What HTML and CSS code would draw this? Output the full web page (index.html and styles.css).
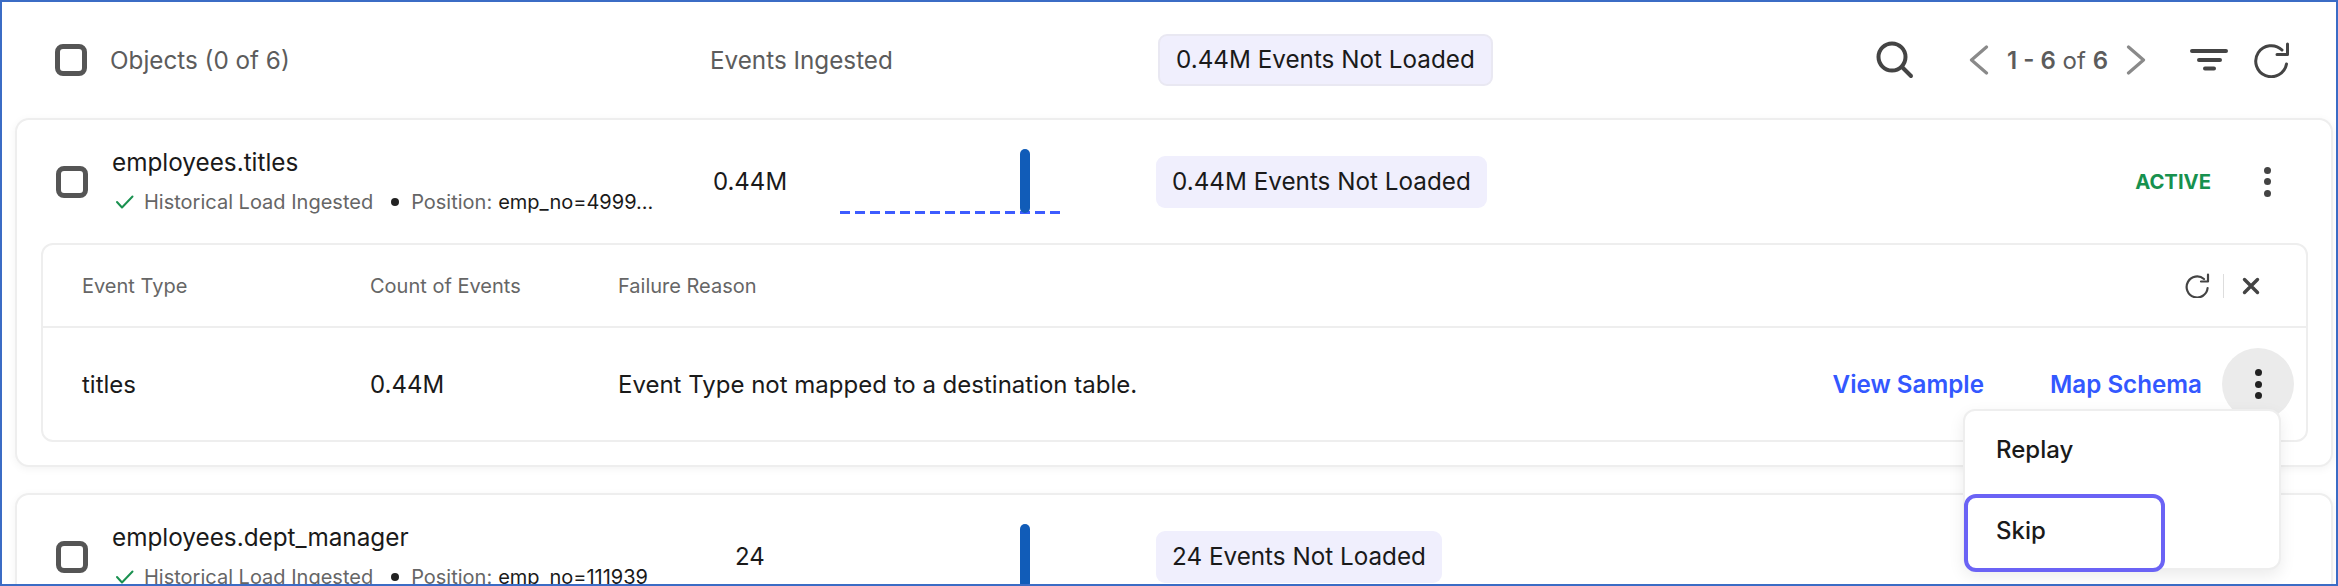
FILE: index.html
```html
<!DOCTYPE html>
<html lang="en">
<head>
    <meta charset="UTF-8">
    <title>Objects</title>
    <link rel="stylesheet" href="styles.css">
</head>
<body>
    <div class="frame">
        <div class="toolbar">
            <div class="toolbar-name">
                <span class="checkbox"></span>
                <span>Objects (0 of 6)</span>
            </div>
            <div class="toolbar-events">Events Ingested</div>
            <div class="badge badge-outlined">0.44M Events Not Loaded</div>
            <div class="toolbar-actions">
                <svg class="icon-search" width="38" height="38" viewBox="0 0 38 38" fill="none" stroke="#444" stroke-width="4" stroke-linecap="round"><circle cx="16" cy="16" r="13.5"/><path d="M26 26 L35 35"/></svg>
                <div class="pager">
                    <svg width="20" height="30" viewBox="0 0 20 30" fill="none" stroke="#8a8a8a" stroke-width="3.2" stroke-linecap="round" stroke-linejoin="round"><path d="M17.5 2 L2.5 15 L17.5 28"/></svg>
                    <span class="pager-text"><b>1 - 6</b> of <b>6</b></span>
                    <svg width="20" height="30" viewBox="0 0 20 30" fill="none" stroke="#8a8a8a" stroke-width="3.2" stroke-linecap="round" stroke-linejoin="round"><path d="M2.5 2 L17.5 15 L2.5 28"/></svg>
                </div>
                <svg class="icon-filter" width="38" height="22" viewBox="0 0 38 22" fill="none" stroke="#444" stroke-width="4" stroke-linecap="round"><path d="M2 2 H36 M9 11 H30 M15 19.5 H24"/></svg>
                <svg class="icon-refresh" width="36" height="36" viewBox="0 0 36 36" fill="none" stroke="#444" stroke-width="3" stroke-linecap="round" stroke-linejoin="round"><path d="M28 8 A15.5 15.5 0 1 0 32.5 22"/><path d="M33.5 2 V12.5 H23"/></svg>
            </div>
        </div>

        <div class="card">
            <div class="row">
                <div class="row-name">
                    <span class="checkbox"></span>
                    <div>
                        <div class="object-title">employees.titles</div>
                        <div class="object-meta">
                            <svg width="20" height="14" viewBox="0 0 20 14" fill="none" stroke="#1a9150" stroke-width="2" stroke-linecap="round" stroke-linejoin="round"><path d="M2 7 L7 12.5 L17.5 1.5"/></svg>
                            <span class="meta-label">Historical Load Ingested</span>
                            <span class="meta-dot"></span>
                            <span class="meta-label">Position:</span>
                            <span class="meta-value">emp_no=4999...</span>
                        </div>
                    </div>
                </div>
                <div class="row-count">0.44M</div>
                <div class="chart"><span class="chart-bar"></span></div>
                <div class="badge">0.44M Events Not Loaded</div>
                <div class="row-status">
                    <span class="status-active">ACTIVE</span>
                    <span class="kebab"><i></i><i></i><i></i></span>
                </div>
            </div>

            <div class="failures">
                <div class="failures-head">
                    <span class="col-type">Event Type</span>
                    <span class="col-count">Count of Events</span>
                    <span class="col-reason">Failure Reason</span>
                    <div class="head-actions">
                        <svg width="25" height="25" viewBox="0 0 25 25" fill="none" stroke="#444" stroke-width="2.2" stroke-linecap="round" stroke-linejoin="round"><path d="M19 6 A10.5 10.5 0 1 0 22.6 15"/><path d="M23 1.5 V8.5 H16"/></svg>
                        <span class="head-divider"></span>
                        <svg width="18" height="18" viewBox="0 0 18 18" fill="none" stroke="#444" stroke-width="3.4" stroke-linecap="round"><path d="M2.5 2.5 L15.5 15.5 M15.5 2.5 L2.5 15.5"/></svg>
                    </div>
                </div>
                <div class="failures-row">
                    <span class="col-type">titles</span>
                    <span class="col-count">0.44M</span>
                    <span class="col-reason">Event Type not mapped to a destination table.</span>
                    <div class="row-actions">
                        <a class="link">View Sample</a>
                        <a class="link">Map Schema</a>
                        <span class="kebab-round"><span class="kebab kebab-dark"><i></i><i></i><i></i></span></span>
                    </div>
                </div>
            </div>
        </div>

        <div class="card">
            <div class="row">
                <div class="row-name">
                    <span class="checkbox"></span>
                    <div>
                        <div class="object-title">employees.dept_manager</div>
                        <div class="object-meta">
                            <svg width="20" height="14" viewBox="0 0 20 14" fill="none" stroke="#1a9150" stroke-width="2" stroke-linecap="round" stroke-linejoin="round"><path d="M2 7 L7 12.5 L17.5 1.5"/></svg>
                            <span class="meta-label">Historical Load Ingested</span>
                            <span class="meta-dot"></span>
                            <span class="meta-label">Position:</span>
                            <span class="meta-value">emp_no=111939</span>
                        </div>
                    </div>
                </div>
                <div class="row-count">24</div>
                <div class="chart"><span class="chart-bar"></span></div>
                <div class="badge">24 Events Not Loaded</div>
            </div>
        </div>

        <!-- Open menu sits over the cards -->
        <div class="menu">
            <div class="menu-item">Replay</div>
            <div class="menu-item menu-item-focus">Skip</div>
        </div>
    </div>
</body>
</html>
```

FILE: styles.css
```css
* {
    box-sizing: border-box;
}

body {
    margin: 0;
    background: #fff;
    color: #1a1a1a;
    font-family: Inter, "Liberation Sans", sans-serif;
    font-size: 24px;
}

.frame {
    position: relative;
    width: 2338px;
    height: 586px;
    padding: 0 3px 0 13px;
    border: 2px solid #3b6cc5;
    overflow: hidden;
    background: #fff;
}

.checkbox {
    display: block;
    flex: none;
    width: 32px;
    height: 32px;
    border: 5px solid #555;
    border-radius: 8px;
}

/* toolbar */
.toolbar {
    display: flex;
    align-items: center;
    height: 116px;
    padding-left: 40px;
    color: #5c5c5c;
    font-size: 24.25px;
}

.toolbar-name {
    display: flex;
    align-items: center;
    gap: 23px;
    width: 655px;
}

.toolbar-events {
    width: 448px;
}

.toolbar-actions {
    display: flex;
    align-items: center;
    margin-left: auto;
    padding-right: 43px;
}

.pager {
    display: flex;
    align-items: center;
    margin-left: 55px;
    gap: 18px;
}

.pager-text {
    color: #5c5c5c;
    font-size: 24px;
}

.pager-text b {
    font-weight: 600;
}

.icon-filter {
    margin-left: 44px;
}

.icon-refresh {
    margin-left: 26px;
}

.badge {
    flex: none;
    height: 52px;
    padding: 0 16px;
    font-size: 24.25px;
    line-height: 52px;
    background: #f0effd;
    border-radius: 9px;
    color: #1a1a1a;
    white-space: nowrap;
}

.badge-outlined {
    border: 2px solid #e9e8f2;
    line-height: 48px;
}

/* cards */
.card {
    margin-bottom: 26px;
    padding: 0 23px 23px 24px;
    background: #fff;
    border: 2px solid #eee;
    border-radius: 14px;
    box-shadow: 0 2px 8px rgba(0, 0, 0, 0.05);
}

.row {
    display: flex;
    align-items: center;
    height: 123px;
    margin-left: -24px;
    margin-right: -23px;
    padding-left: 39px;
}

.row-name {
    display: flex;
    align-items: center;
    gap: 24px;
    width: 630px;
}

.object-title {
    font-size: 24.3px;
    line-height: 32px;
}

.object-meta {
    display: flex;
    align-items: center;
    margin-top: 11px;
    margin-bottom: 3px;
    font-size: 20px;
    line-height: 26px;
    white-space: nowrap;
}

.object-meta svg {
    margin: 0 9px 0 3px;
}

.meta-label {
    color: #666;
}

.meta-dot {
    width: 8px;
    height: 8px;
    margin: 0 12px 0 18px;
    background: #222;
    border-radius: 50%;
}

.meta-value {
    margin-left: 6px;
    color: #1a1a1a;
}

.row-count {
    width: 128px;
    text-align: center;
}

.chart {
    position: relative;
    flex: none;
    width: 221px;
    height: 65px;
    margin: 0 95px 0 26px;
    background: repeating-linear-gradient(90deg, #3d5cff 0 10px, transparent 10px 15px) left bottom / 100% 3px no-repeat;
}

.chart-bar {
    position: absolute;
    left: 180px;
    top: 0;
    width: 10px;
    height: 64px;
    background: #115cb8;
    border-radius: 5px;
}

.row-status {
    display: flex;
    align-items: center;
    margin-left: auto;
    padding-right: 60px;
}

.status-active {
    color: #17914f;
    font-size: 20.25px;
    font-weight: 700;
}

.row-status .kebab {
    margin-left: 53px;
}

.kebab {
    display: flex;
    flex-direction: column;
    gap: 4.5px;
}

.kebab i {
    display: block;
    width: 7px;
    height: 7px;
    background: #444;
    border-radius: 50%;
}

.kebab-dark i {
    background: #222;
}

/* failures table */
.failures {
    background: #fff;
    border: 2px solid #eee;
    border-radius: 12px;
}

.failures-head,
.failures-row {
    display: flex;
    align-items: center;
    padding-left: 39px;
}

.failures-head {
    height: 83px;
    padding-right: 46px;
    border-bottom: 2px solid #eee;
    color: #666;
    font-size: 20px;
}

.failures-row {
    height: 112px;
    padding-right: 12px;
}

.col-type {
    width: 288px;
}

.col-count {
    width: 248px;
}

.head-actions {
    display: flex;
    align-items: center;
    margin-left: auto;
}

.head-divider {
    width: 1px;
    height: 24px;
    margin: 0 18px 0 13px;
    background: #ddd;
}

.row-actions {
    display: flex;
    align-items: center;
    margin-left: auto;
}

.link {
    margin-right: 66px;
    color: #3358ff;
    font-weight: 600;
    font-size: 24.2px;
}

.link + .link {
    margin-right: 20px;
}

.kebab-round {
    display: flex;
    align-items: center;
    justify-content: center;
    width: 72px;
    height: 72px;
    background: #ebebeb;
    border-radius: 50%;
}

/* open menu */
.menu {
    position: absolute;
    top: 407px;
    right: 55px;
    width: 318px;
    height: 161px;
    background: #fff;
    border: 2px solid #eee;
    border-radius: 12px;
    box-shadow: 0 6px 16px rgba(0, 0, 0, 0.08);
}

.menu-item {
    display: flex;
    align-items: center;
    height: 83px;
    padding-left: 31px;
    padding-bottom: 6px;
    font-weight: 500;
}

.menu-item-focus {
    width: 201px;
    height: 78px;
    margin-left: -1px;
    padding-left: 28px;
    border: 4px solid #6b63f5;
    border-radius: 12px;
}
```
